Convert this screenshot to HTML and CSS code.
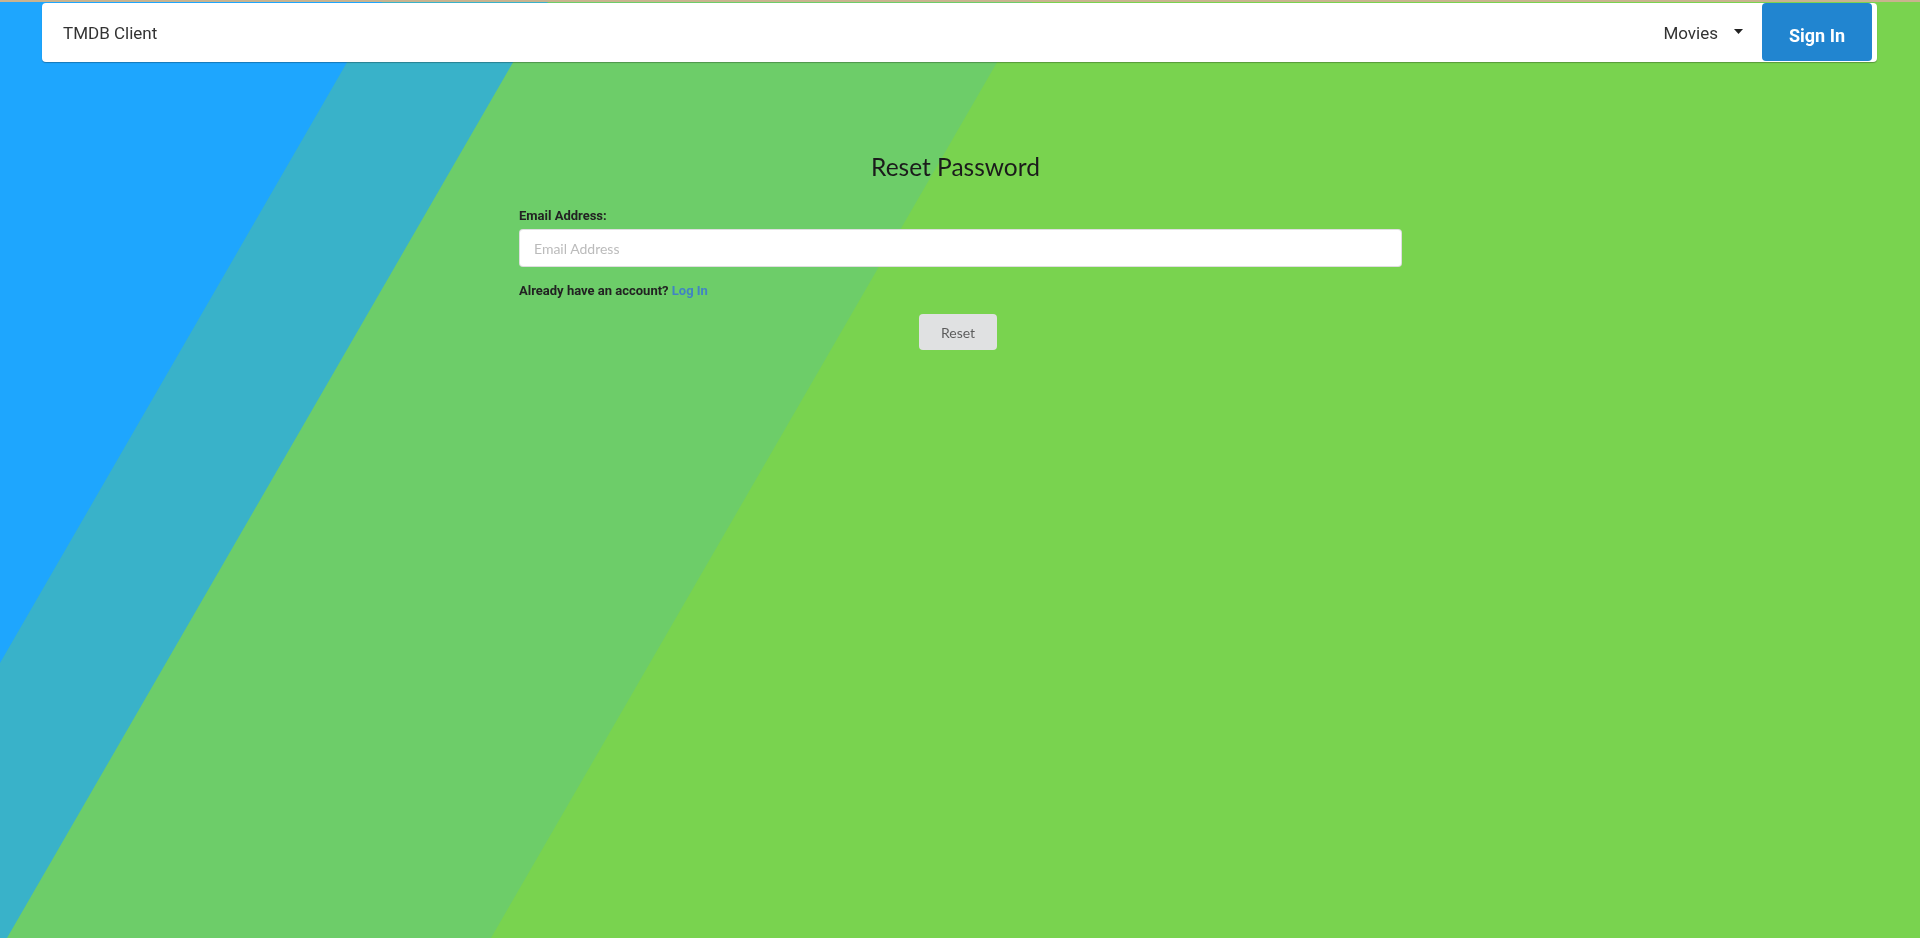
FILE: index.html
```html
<!DOCTYPE html>
<html lang="en">
<head>
<meta charset="utf-8">
<title>TMDB Client - Reset Password</title>
<link rel="stylesheet" href="styles.css">
</head>
<body>
<svg class="backdrop" viewBox="0 0 1920 938" preserveAspectRatio="none" aria-hidden="true">
  <rect x="0" y="0" width="1920" height="938" fill="#79d34f"/>
  <polygon points="0,0 1033,0 491,938 0,938" fill="#6dcd69"/>
  <polygon points="0,0 549,0 7,938 0,938" fill="#39b2c9"/>
  <polygon points="0,0 383,0 0,663" fill="#1ea6fe"/>
</svg>
<div class="topline"></div>
<nav class="navbar">
  <div class="brand">TMDB Client</div>
  <div class="nav-right">
    <div class="dropdown">
      <span>Movies</span>
      <svg class="caret" width="9" height="5" viewBox="0 0 9 5"><polygon points="0,0 9,0 4.5,5" fill="#222"/></svg>
    </div>
    <button class="signin">Sign In</button>
  </div>
</nav>
<main class="page">
  <div class="form-wrap">
    <h2 class="title">Reset Password</h2>
    <label class="label" for="email">Email Address:</label>
    <input class="input" id="email" type="email" placeholder="Email Address">
    <p class="hint">Already have an account? <a href="#" class="link">Log In</a></p>
    <div class="actions">
      <button class="reset">Reset</button>
    </div>
  </div>
</main>
</body>
</html>
```
FILE: styles.css
```css
html, body {
  margin: 0;
  padding: 0;
  height: 100%;
}
body {
  font-family: Roboto, "Liberation Sans", sans-serif;
  color: #222;
  overflow: hidden;
}
.backdrop {
  position: fixed;
  inset: 0;
  width: 100%;
  height: 100%;
  z-index: -1;
  display: block;
}
.topline {
  height: 2px;
  background: #c9b38f;
}
.navbar {
  margin: 1px 43px 0 42px;
  height: 59px;
  background: #fff;
  border-radius: 4px;
  box-shadow: 0 1px 1px rgba(0, 0, 0, 0.28);
  display: flex;
  align-items: center;
  justify-content: space-between;
}
.brand {
  padding-left: 21px;
  font-size: 17px;
  color: #333;
}
.nav-right {
  display: flex;
  align-items: stretch;
  height: 100%;
  padding-right: 5px;
}
.dropdown {
  display: flex;
  align-items: center;
  font-size: 17px;
  color: #333;
  gap: 16px;
  margin-right: 19px;
}
.caret {
  display: block;
  margin-top: -2px;
}
.signin {
  width: 110px;
  height: 58px;
  border: none;
  border-radius: 4px;
  background: #2185d0;
  color: #fff;
  font-family: Roboto, "Liberation Sans", sans-serif;
  font-weight: 700;
  font-size: 18px;
  padding: 7px 0 0;
  cursor: pointer;
}
.page {
  padding-top: 91px;
}
.form-wrap {
  width: 883px;
  margin-left: 519px;
  display: flex;
  flex-direction: column;
}
.title {
  margin: 0;
  font-family: Lato, "Liberation Sans", sans-serif;
  font-weight: 400;
  font-size: 24.5px;
  line-height: 28px;
  text-align: center;
  padding-right: 10px;
  color: #1b1b1b;
}
.label {
  margin-top: 27px;
  font-size: 13px;
  line-height: 16px;
  font-weight: 700;
  color: #222;
}
.input {
  margin-top: 5px;
  box-sizing: border-box;
  height: 38px;
  width: 100%;
  border: 1px solid rgba(34, 36, 38, 0.15);
  border-radius: 4px;
  padding: 0 14px;
  font-family: Lato, "Liberation Sans", sans-serif;
  font-size: 14px;
  background: #fff;
  outline: none;
}
.input::placeholder {
  color: rgba(180, 180, 180, 0.9);
}
.hint {
  margin: 16px 0 0;
  font-size: 13px;
  line-height: 16px;
  font-weight: 700;
  color: #222;
}
.link {
  color: #4183c4;
  text-decoration: none;
}
.actions {
  display: flex;
  justify-content: center;
  padding-right: 5px;
  margin-top: 15px;
}
.reset {
  width: 78px;
  height: 36px;
  border: none;
  border-radius: 4px;
  background: #e0e1e2;
  color: rgba(0, 0, 0, 0.6);
  font-family: Lato, "Liberation Sans", sans-serif;
  font-size: 14px;
  padding: 0;
  cursor: pointer;
}
```
